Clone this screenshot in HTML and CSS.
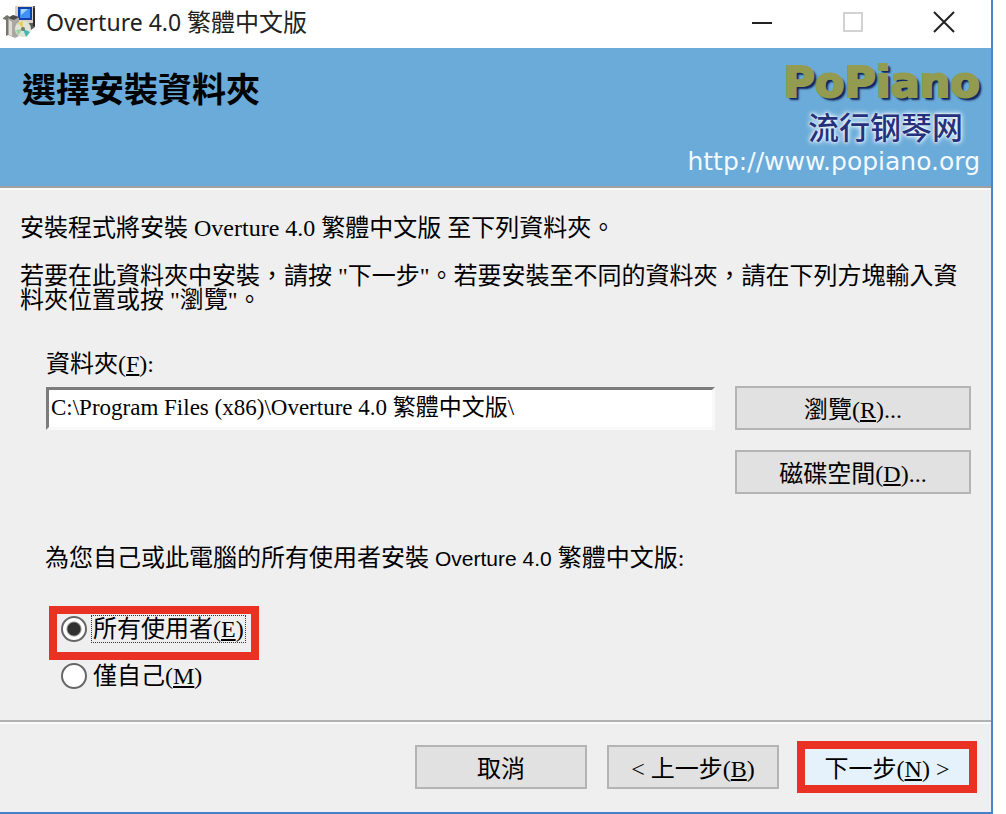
FILE: index.html
```html
<!DOCTYPE html>
<html lang="zh-TW">
<head>
<meta charset="utf-8">
<title>Overture 4.0 繁體中文版</title>
<link rel="stylesheet" href="styles.css">
</head>
<body>
<main class="window">
  <header class="titlebar">
    <svg class="app-icon" viewBox="0 0 32 34" aria-hidden="true">
      <path d="M12 1h20v21l-4 3H17l-5-5z" fill="#5a5a5a"/>
      <path d="M12 1h18v17H12z" fill="#d8d2c4"/>
      <path d="M15 2h14v13H15z" fill="#123fa8"/>
      <path d="M17 4h10v9H17z" fill="#3f92f5"/>
      <path d="M18 4h7l-7 6z" fill="#a5d6ff"/>
      <path d="M30 3h2v18h-2z" fill="#2b2b2b"/>
      <path d="M0 13l4-3 3 2v17l-4 2V15l-3-1z" fill="#77776f"/>
      <path d="M5 13l5-3 6 3v18l-4 2-7-3z" fill="#a9a9a1"/>
      <path d="M6 15l3 2v14l-3-1z" fill="#deded6"/>
      <path d="M5 13l5-3 6 2-5 3z" fill="#4c4c48"/>
      <circle cx="20" cy="24" r="8" fill="#dfe5d5"/>
      <path d="M20 24l-5-6 5-2z" fill="#e8cf62"/>
      <path d="M20 24l7 3-4 5z" fill="#42b8b0"/>
      <path d="M20 24l-5 6-2-5z" fill="#9bd0a0"/>
      <circle cx="20" cy="24" r="2" fill="#777"/>
    </svg>
    <h1 class="title">Overture 4.0 <span class="title-cjk">繁體中文版</span></h1>
    <div class="controls">
      <button class="control" type="button" aria-label="最小化"><svg viewBox="0 0 22 22"><path d="M1 12h20" stroke="#222" stroke-width="2"/></svg></button>
      <button class="control" type="button" aria-label="最大化" disabled><svg viewBox="0 0 22 22"><path d="M2 2h18v18H2z" fill="none" stroke="#d2d2d2" stroke-width="2"/></svg></button>
      <button class="control" type="button" aria-label="關閉"><svg viewBox="0 0 22 22"><path d="M1 1l20 20M21 1L1 21" stroke="#222" stroke-width="2"/></svg></button>
    </div>
  </header>

  <section class="banner">
    <h2 class="heading">選擇安裝資料夾</h2>
    <div class="brand">
      <div class="brand-name">PoPiano</div>
      <div class="brand-cjk" lang="zh-CN">流行钢琴网</div>
      <div class="brand-url">http://www.popiano.org</div>
    </div>
  </section>

  <form class="content">
    <p class="text">安裝程式將安裝 Overture 4.0 繁體中文版 至下列資料夾。</p>
    <p class="text">若要在此資料夾中安裝，請按 "下一步"。若要安裝至不同的資料夾，請在下列方塊輸入資料夾位置或按 "瀏覽"。</p>
    <div class="folder">
      <div class="field">
        <label for="path">資料夾(<u>F</u>):</label>
        <input class="path" id="path" type="text" value="C:\Program Files (x86)\Overture 4.0 繁體中文版\">
      </div>
      <div class="folder-actions">
        <button class="button" type="button">瀏覽(<u>R</u>)...</button>
        <button class="button" type="button">磁碟空間(<u>D</u>)...</button>
      </div>
    </div>
    <fieldset class="users">
      <legend class="legend">為您自己或此電腦的所有使用者安裝 <span class="product">Overture 4.0</span> 繁體中文版:</legend>
      <label class="option marked"><input type="radio" name="user" checked><span class="option-text focused">所有使用者(<u>E</u>)</span></label>
      <label class="option"><input type="radio" name="user"><span class="option-text">僅自己(<u>M</u>)</span></label>
    </fieldset>
  </form>

  <footer class="footer">
    <button class="button" type="button">取消</button>
    <button class="button" type="button">&lt; 上一步(<u>B</u>)</button>
    <button class="button next" type="button">下一步(<u>N</u>) &gt;</button>
  </footer>
</main>
</body>
</html>
```
FILE: styles.css
```css
* { box-sizing: border-box; }

body {
  margin: 0;
  background: #fff;
  color: #000;
  font: 24px/24px "Liberation Serif", "Noto Sans CJK TC", serif;
}

h1, h2, p { margin: 0; }

button, input { font: inherit; color: inherit; }

u { text-underline-offset: 2px; text-decoration-thickness: 2px; }

.window {
  display: flex;
  flex-direction: column;
  min-height: 100vh;
  margin-right: 13px;
  border-right: 2px solid #4a86c8;
  border-bottom: 2px solid #4580c8;
  background: #efefef;
}

.titlebar {
  display: flex;
  align-items: center;
  height: 48px;
  padding: 0 24px 4px 3px;
  background: #fff;
}

.app-icon { width: 32px; height: 34px; }

.title {
  flex: 1;
  margin-left: 11px;
  color: #222;
  font: 23px/32px "Noto Sans", "Noto Sans CJK TC", sans-serif;
}

.title-cjk { font-size: 24px; }

.controls { display: flex; gap: 46px; }

.control {
  width: 45px;
  height: 44px;
  padding: 0 11px;
  border: 0;
  background: none;
}

.control svg { display: block; width: 22px; height: 22px; }

.banner {
  display: flex;
  justify-content: space-between;
  height: 140px;
  padding: 12px 11px 0 22px;
  border-bottom: 2px solid #a0a0a0;
  box-shadow: 0 2px #fcfcfc;
  background: #6aabd9;
}

.heading {
  padding-top: 8px;
  font: bold 34px/40px "Noto Sans CJK TC", sans-serif;
}

.brand { text-align: right; }

.brand-name {
  color: #929b50;
  font: bold 43px/44px "DejaVu Sans", sans-serif;
  -webkit-text-stroke: 2px #929b50;
  text-shadow: 2px 2px 1px #14285f, 3px 3px 2px #14285f;
}

.brand-cjk {
  padding-right: 17px;
  color: #26317d;
  font: 500 31px/44px "Noto Sans CJK SC", sans-serif;
  text-shadow: 0 0 2px #fff, 0 0 4px #fff, 0 0 6px #e4f4ff;
}

.brand-url {
  color: #f2faff;
  font: 25px/28px "DejaVu Sans", sans-serif;
}

.content { flex: 1; padding: 28px 20px 20px; }

.text { margin-bottom: 24px; }

.folder {
  display: flex;
  gap: 20px;
  margin-top: 40px;
  padding-left: 26px;
}

.field { flex: 1; }

.field label { display: block; margin-bottom: 11px; }

.path {
  display: block;
  width: 100%;
  height: 43px;
  padding: 0 0 8px 2px;
  border: 3px solid;
  border-color: #7c7c7c #f8f8f8 #f8f8f8 #7c7c7c;
  background: #fff;
  font-size: 23px;
}

.folder-actions {
  display: flex;
  flex-direction: column;
  gap: 20px;
  width: 236px;
  padding-top: 34px;
}

.button {
  height: 44px;
  padding: 4px 0 0;
  border: 2px solid #b4b4b4;
  background: #e1e1e1;
}

.users {
  display: flex;
  flex-direction: column;
  align-items: flex-start;
  gap: 2px;
  margin: 52px 0 0;
  padding: 0 0 0 25px;
  border: 0;
}

.legend { margin-bottom: 35px; padding: 0; }

.product { font-family: "Liberation Sans", sans-serif; font-size: 21px; }

.option {
  display: flex;
  align-items: center;
  gap: 4px;
  padding-left: 16px;
}

.option input {
  appearance: none;
  width: 26px;
  height: 26px;
  margin: 0;
  border: 2px solid #666;
  border-radius: 50%;
  background: #fff;
}

.option input:checked { background: radial-gradient(circle, #303030 0 6px, #fff 8px); }

.option-text { padding: 1px; border: 1px solid transparent; }

.focused { border: 1px dotted #333; }

.marked {
  height: 54px;
  margin-left: 4px;
  padding: 0 5px 8px 4px;
  border: 8px solid #e93223;
}

.footer {
  display: flex;
  justify-content: flex-end;
  align-items: center;
  gap: 20px;
  height: 92px;
  padding-right: 14px;
  border-top: 2px solid #b2b2b2;
  box-shadow: inset 0 2px #fafafa;
}

.footer .button { width: 172px; }

.footer .next {
  width: 180px;
  height: 52px;
  margin-left: -2px;
  border: 8px solid #e93223;
  background: #e5f1fb;
}
```
